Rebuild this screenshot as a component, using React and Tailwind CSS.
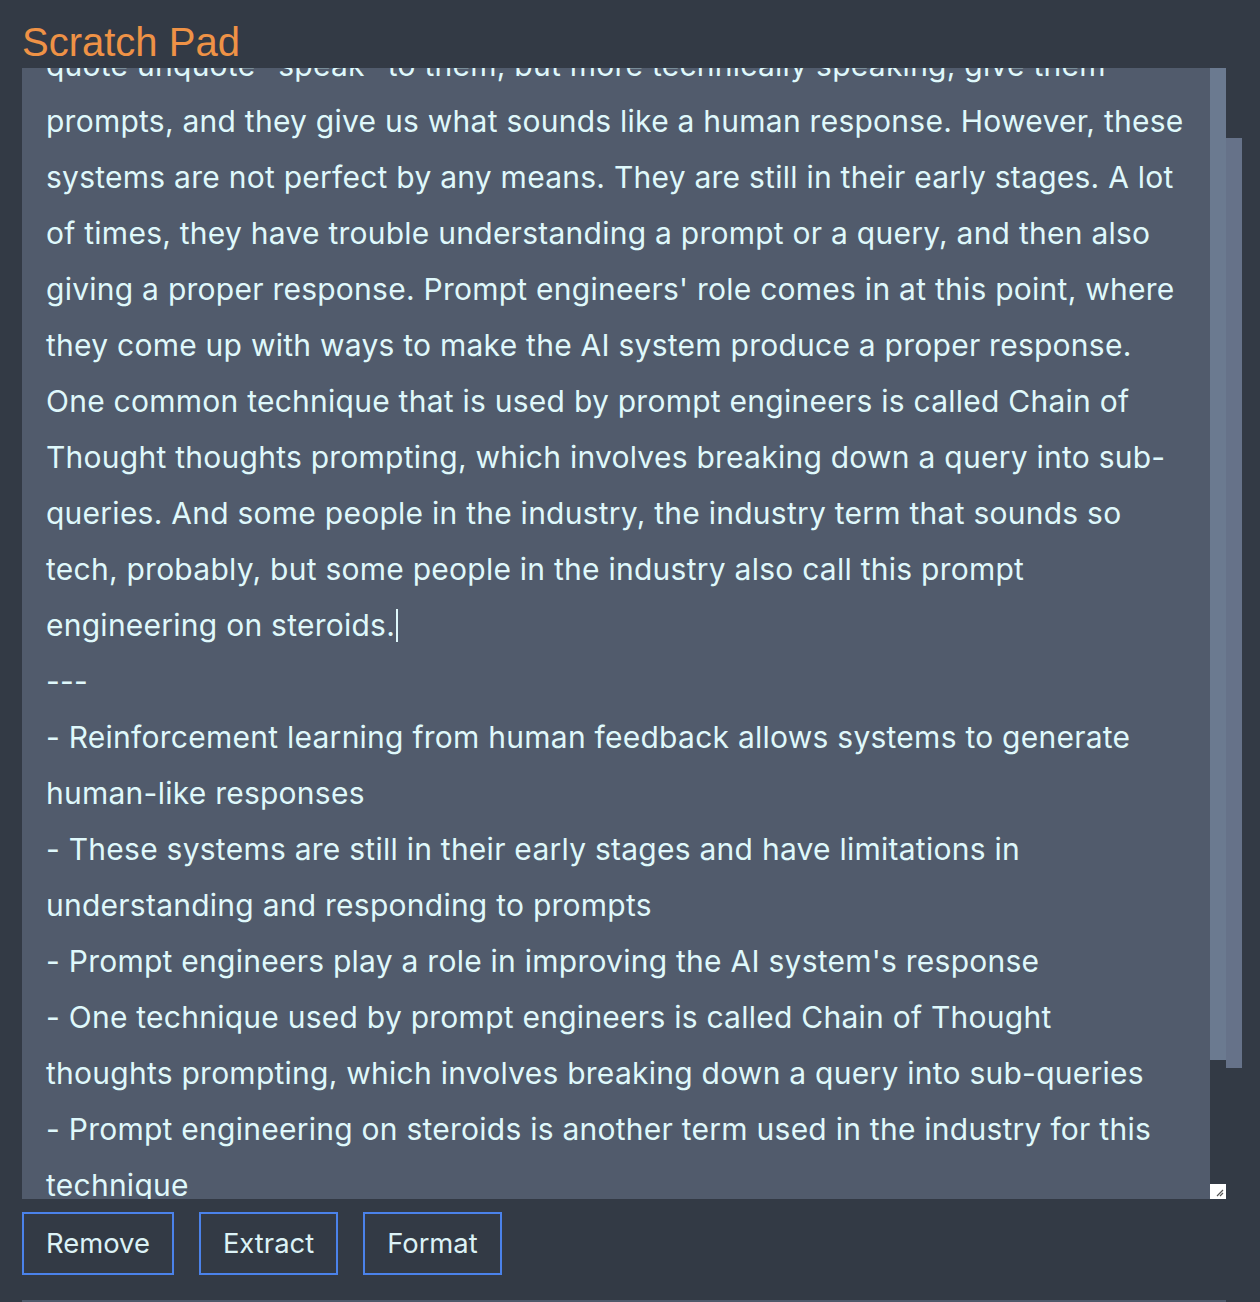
import React from "react";

const lines = [
  'quote unquote "speak" to them, but more technically speaking, give them',
  "prompts, and they give us what sounds like a human response. However, these",
  "systems are not perfect by any means. They are still in their early stages. A lot",
  "of times, they have trouble understanding a prompt or a query, and then also",
  "giving a proper response. Prompt engineers' role comes in at this point, where",
  "they come up with ways to make the AI system produce a proper response.",
  "One common technique that is used by prompt engineers is called Chain of",
  "Thought thoughts prompting, which involves breaking down a query into sub-",
  "queries. And some people in the industry, the industry term that sounds so",
  "tech, probably, but some people in the industry also call this prompt",
  "engineering on steroids.",
  "---",
  "- Reinforcement learning from human feedback allows systems to generate",
  "human-like responses",
  "- These systems are still in their early stages and have limitations in",
  "understanding and responding to prompts",
  "- Prompt engineers play a role in improving the AI system's response",
  "- One technique used by prompt engineers is called Chain of Thought",
  "thoughts prompting, which involves breaking down a query into sub-queries",
  "- Prompt engineering on steroids is another term used in the industry for this",
  "technique",
];

function ActionButton({ children }) {
  return (
    <button className="h-[63px] px-[22px] border-2 border-[#4b82ea] text-[27.4px] leading-none text-[#dcf2f6] bg-transparent">
      {children}
    </button>
  );
}

export default function App() {
  return (
    <div className="w-full h-[1302px] overflow-hidden bg-[#333a45] pl-[22px] font-['Inter','Noto_Sans',sans-serif]">
      {/* Header */}
      <div className="h-[68px] pt-[19px]">
        <h1 className="text-[40px] leading-[46px] text-[#ef9246] font-['Liberation_Sans',Arial,sans-serif]">
          Scratch Pad
        </h1>
      </div>

      {/* Textarea + scrollbar */}
      <div className="flex">
        <div className="w-[1188px] h-[1131px] bg-[#515b6c] overflow-hidden pl-[24px]">
          <div className="mt-[-31px] text-[30px] tracking-[0.25px] leading-[56px] text-[#dff8fb] whitespace-nowrap">
            {lines.map((l, i) => (
              <div key={i}>
                {l}
                {i === 10 && (
                  <span className="inline-block w-[2px] h-[33px] bg-[#dff8fb] align-[-6px] ml-[1px]" />
                )}
              </div>
            ))}
          </div>
        </div>
        <div className="w-[16px] h-[1131px] flex flex-col">
          <div className="h-[992px] bg-[#6b7a90]" />
          <div className="flex-1" />
          <div className="h-[15px] bg-white flex items-end justify-end p-[2px]">
            <svg width="8" height="8" viewBox="0 0 8 8">
              <path d="M1 7 L7 1 M4 7 L7 4" stroke="#555" strokeWidth="1.2" />
            </svg>
          </div>
        </div>
        <div className="w-[16px] mt-[70px] h-[930px] bg-[#667289]" />
      </div>

      {/* Actions */}
      <div className="flex gap-[25px] mt-[13px]">
        <ActionButton>Remove</ActionButton>
        <ActionButton>Extract</ActionButton>
        <ActionButton>Format</ActionButton>
      </div>

      <div className="mt-[25px] w-[1204px] h-[2px] bg-[#4f5a6b]" />
    </div>
  );
}
